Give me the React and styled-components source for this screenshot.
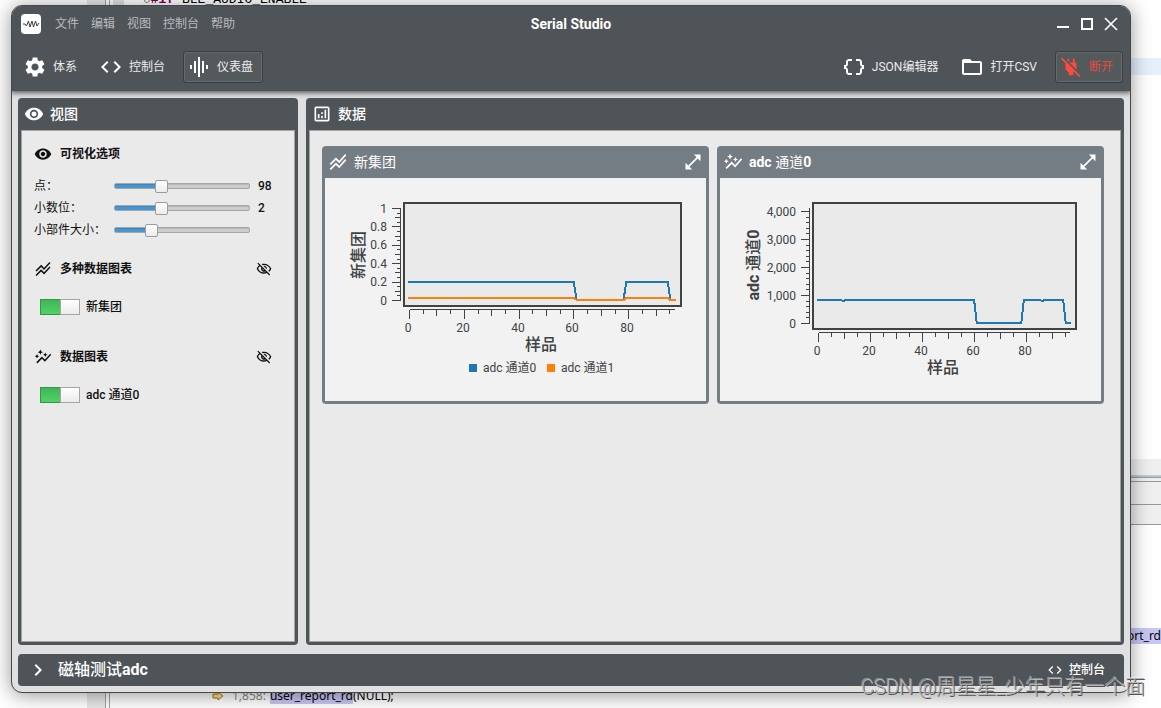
import React, { useState } from "react";
import styled, { createGlobalStyle } from "styled-components";
import {
  MdSettings,
  MdCode,
  MdDataObject,
  MdFolderOpen,
  MdVisibility,
  MdOutlineVisibilityOff,
  MdStackedLineChart,
  MdAutoGraph,
  MdOutlineAnalytics,
  MdOpenInFull,
  MdChevronRight,
} from "react-icons/md";

const font = '"Roboto", "Noto Sans CJK SC", sans-serif';

const GlobalStyle = createGlobalStyle`
  *, *::before, *::after { box-sizing: border-box; }
  body { margin: 0; background: #fff; font-family: ${font}; font-size: 12px; line-height: 16px; color: #111; }
  button, input { font: inherit; margin: 0; }
  svg { display: block; flex: none; }
`;

/* ---------- desktop behind the window ---------- */

const Desktop = styled.div`
  position: relative;
  min-height: 100vh;
  display: flex;
  padding: 5px 30px 15px 11px;
  overflow: hidden;
`;

const Behind = styled.div`
  position: absolute;
  white-space: pre;
  top: ${(p) => p.$top};
  bottom: ${(p) => p.$bottom};
  left: ${(p) => p.$left};
  right: ${(p) => p.$right};
  width: ${(p) => p.$width};
  height: ${(p) => p.$height};
  background: ${(p) => p.$bg};
`;

const Gutter = styled(Behind)`
  border-right: 1px solid #a0a0a0;
  &::after {
    content: "";
    position: absolute;
    top: 0;
    bottom: 0;
    right: -5px;
    width: 1px;
    background: #a0a0a0;
  }
`;

const CodeTop = styled(Behind)`
  font: 13px/16px "Liberation Mono", monospace;
  color: #000;
  b { color: #7f0055; }
  span { color: #888; }
`;

const CodeLine = styled(Behind)`
  font: 12px/16px "Noto Sans", sans-serif;
  color: #000;
  display: flex;
  align-items: center;
  mark { background: #c8c6f5; color: #000; }
  span { color: #888; margin: 0 4px 0 8px; }
`;

const Watermark = styled.div`
  position: absolute;
  right: 16px;
  bottom: 8px;
  font-size: 20px;
  line-height: 26px;
  font-weight: 300;
  white-space: nowrap;
  color: #b4b4b4;
  text-shadow: 1px 1px 0 #555, -1px -1px 0 rgba(255, 255, 255, 0.4);
`;

/* ---------- window ---------- */

const Window = styled.main`
  position: relative;
  flex: 1;
  min-width: 0;
  display: flex;
  flex-direction: column;
  border: 1px solid #42484b;
  border-radius: 11px;
  background: #e0e0e0;
  box-shadow: 0 2px 20px rgba(0, 0, 0, 0.42);
  overflow: hidden;
`;

const Header = styled.header`
  background: #4f5458;
  color: #fff;
  box-shadow: 0 1px 5px 1px rgba(0, 0, 0, 0.6);
`;

const TitleBar = styled.div`
  display: grid;
  grid-template-columns: 1fr auto 1fr;
  align-items: center;
  height: 36px;
  padding: 0 7px;
`;

const Menu = styled.nav`
  display: flex;
  align-items: center;
  gap: 12px;
  padding-left: 2px;
`;

const Logo = styled.svg`
  margin-right: 2px;
`;

const MenuItem = styled.button`
  border: 0;
  padding: 0;
  background: none;
  color: #b9bbbc;
`;

const Title = styled.h1`
  margin: 0;
  font-size: 14px;
  line-height: 20px;
  font-weight: 700;
`;

const WindowButtons = styled.div`
  display: flex;
  justify-content: flex-end;
`;

const WindowButton = styled.button`
  border: 0;
  padding: 0;
  background: none;
  color: #fff;
`;

const Toolbar = styled.div`
  display: flex;
  gap: 8px;
  padding: 9px 7px 8px;
`;

const Spacer = styled.div`
  flex: 1;
`;

const ToolButton = styled.button`
  display: flex;
  align-items: center;
  gap: 6px;
  height: 32px;
  padding: 0 9px 0 3px;
  border: 1px solid ${(p) => (p.$framed ? "#3b3f42" : "transparent")};
  border-radius: 3px;
  background: ${(p) => (p.$framed ? "#54595c" : "none")};
  box-shadow: ${(p) => (p.$framed ? "inset 0 0 0 1px #64696c" : "none")};
  color: ${(p) => (p.$danger ? "#ff4b3e" : "#fff")};
  white-space: nowrap;
  span { color: ${(p) => (p.$danger ? "#e8493e" : "#ececec")}; }
`;

const Body = styled.div`
  flex: 1;
  display: flex;
  flex-direction: column;
  gap: 9px;
  padding: 7px 6px 6px;
`;

const Panels = styled.div`
  flex: 1;
  display: grid;
  grid-template-columns: 280px 1fr;
  gap: 8px;
`;

const Panel = styled.section`
  display: flex;
  flex-direction: column;
  min-width: 0;
  padding: 0 3px 3px;
  border-radius: 4px;
  background: #4f5458;
`;

const PanelHeader = styled.h2`
  display: flex;
  align-items: center;
  gap: 6px;
  height: 32px;
  margin: 0;
  padding: 0 3px;
  color: #fff;
  font-size: 14px;
  font-weight: 500;
`;

const PanelBody = styled.div`
  flex: 1;
  border: 1px solid #a3a3a3;
  background: #eaeaea;
  padding: ${(p) => p.$padding};
`;

/* ---------- sidebar ---------- */

const SectionHeader = styled.div`
  display: flex;
  align-items: center;
  justify-content: space-between;
  height: 24px;
`;

const SectionTitle = styled.h3`
  display: flex;
  align-items: center;
  gap: 8px;
  margin: 0;
  font-size: 12px;
  font-weight: 700;
`;

const IconButton = styled.button`
  border: 0;
  padding: 0;
  background: none;
  color: inherit;
`;

const SliderList = styled.div`
  margin: 9px 0 16px;
`;

const SliderRow = styled.div`
  display: grid;
  grid-template-columns: 80px 1fr 22px;
  align-items: center;
  height: 22px;
  output { margin-left: 8px; font-weight: 500; white-space: nowrap; }
`;

const Range = styled.input`
  appearance: none;
  width: 100%;
  height: 14px;
  background: none;
  &::-webkit-slider-runnable-track {
    height: 6px;
    border: 1px solid #a6a6a6;
    border-radius: 2px;
    background: linear-gradient(
      to right,
      #4596d1 ${(p) => p.$fill}%,
      #cdcdcd ${(p) => p.$fill}%
    );
    box-shadow: inset 0 1px 0 rgba(0, 0, 0, 0.1);
  }
  &::-webkit-slider-thumb {
    appearance: none;
    width: 13px;
    height: 13px;
    margin-top: -4px;
    border: 1px solid #9c9c9c;
    border-radius: 2px;
    background: linear-gradient(#fff, #ececec);
  }
`;

const SwitchRow = styled.label`
  display: flex;
  align-items: center;
  gap: 6px;
  height: 24px;
  margin: 14px 0 26px;
  padding-left: 6px;
  font-weight: 500;
`;

const Switch = styled.input`
  appearance: none;
  position: relative;
  width: 40px;
  height: 16px;
  border: 1px solid #a5a5a5;
  border-radius: 1px;
  background: #d0d0d0;
  &:checked {
    border-color: #3a9148 #a5a5a5 #3a9148 #3a9148;
    background: linear-gradient(#42b556, #4fd465);
  }
  &::after {
    content: "";
    position: absolute;
    top: -1px;
    bottom: -1px;
    left: -1px;
    width: 20px;
    border: 1px solid #a5a5a5;
    background: linear-gradient(#fff, #ececec);
  }
  &:checked::after { left: 19px; }
`;

/* ---------- dashboard ---------- */

const Cards = styled.div`
  display: grid;
  grid-template-columns: 1fr 1fr;
  gap: 8px;
`;

const Card = styled.article`
  min-width: 0;
  padding: 0 3px 3px;
  border-radius: 4px;
  background: #757d84;
`;

const CardHeader = styled.div`
  display: flex;
  align-items: center;
  justify-content: space-between;
  height: 32px;
  padding: 0 3px;
  color: #fff;
`;

const CardTitle = styled.h3`
  display: flex;
  align-items: center;
  gap: 6px;
  margin: 0;
  font-size: 14px;
  font-weight: 400;
`;

const Plot = styled.svg`
  width: 100%;
  height: auto;
  background: #f2f2f2;
  font-family: ${font};
  font-size: 12px;
  fill: #404244;
`;

const AxisTitle = styled.text`
  font-size: 16px;
  font-weight: 500;
  text-anchor: middle;
`;

const BoldSpan = styled.tspan`
  font-weight: 700;
`;

const Footer = styled.footer`
  display: flex;
  align-items: center;
  justify-content: space-between;
  height: 32px;
  padding: 0 19px 0 8px;
  border-radius: 4px;
  background: #4f5458;
  color: #fff;
`;

const ProjectButton = styled.button`
  display: flex;
  align-items: center;
  gap: 8px;
  border: 0;
  padding: 0;
  background: none;
  color: #fff;
  font-size: 16px;
  font-weight: 500;
`;

const ConsoleButton = styled(ProjectButton)`
  gap: 6px;
  font-size: 12px;
`;

/* ---------- icons ---------- */

const EqualizerIcon = () => (
  <svg width="24" height="24" viewBox="0 0 24 24" fill="currentColor" shapeRendering="crispEdges">
    <path d="M3 10h2v4H3zM7 6h2v12H7zM11 2h2v20h-2zM15 6h2v12h-2zM19 10h2v4h-2z" />
  </svg>
);

const PlugOffIcon = () => (
  <svg width="24" height="24" viewBox="-1 -1 26 26" fill="currentColor">
    <path d="M20.84 22.73 15.31 17.2 14.5 18v3h-5v-3L6 14.5V9c0-.3.1-.59.25-.86L1.11 3l1.28-1.27 19.72 19.73-1.27 1.27M18 14.5V9c0-1-1-2-2-2V3h-2v4h-3.8l7.65 7.65.15-.15M10 3H8v1.8l2 2V3z" />
  </svg>
);

const AppLogo = () => (
  <Logo width="20" height="20" viewBox="0 0 20 20">
    <rect width="20" height="20" rx="4" fill="#fff" />
    <path
      d="M2 10h2l1.5 2 2-5 1.5 6 2-6 1.5 6 2-6 1.5 5 2-3"
      fill="none"
      stroke="#3c4043"
      strokeWidth="1"
      strokeLinejoin="round"
    />
  </Logo>
);

const windowIcons = {
  最小化: { d: "M6 15h12", width: 2 },
  最大化: { d: "M7 7h10v10H7z", width: 2 },
  关闭: { d: "M6 6l12 12M18 6L6 18", width: 1.6 },
};

/* ---------- components ---------- */

/* Sets the Latin letters and digits of a mixed title in bold. */
function Mixed({ text, as: Bold = "b" }) {
  return text
    .split(/([A-Za-z0-9]+)/)
    .map((part, i) => (i % 2 ? <Bold key={i}>{part}</Bold> : part));
}

function Slider({ id, label, initial, suffix }) {
  const [value, setValue] = useState(initial);
  return (
    <SliderRow>
      <label htmlFor={id}>{label}</label>
      <Range
        id={id}
        type="range"
        min="0"
        max="100"
        value={value}
        $fill={value}
        onChange={(e) => setValue(Number(e.target.value))}
      />
      <output htmlFor={id}>{suffix}</output>
    </SliderRow>
  );
}

function Chart({ frame, xAxis, yAxis, series, xTitle, yTitle, legend, name }) {
  const xTicks = Array.from({ length: 20 }, (_, i) => i * 5);
  return (
    <Plot viewBox="0 0 381 223" role="img" aria-label={name}>
      <rect {...frame} fill="#eaeaea" stroke="#404244" strokeWidth="2" />
      <g stroke="#404244" fill="none" shapeRendering="crispEdges">
        <path d={`M${yAxis.x} ${yAxis.top}V${yAxis.zero}`} />
        {yAxis.ticks.map((t) => (
          <path key={t.at} d={`M${yAxis.x} ${yAxis.zero - Math.round(t.at * yAxis.span)}h${-t.size}`} />
        ))}
        <path d={`M${xAxis.zero} ${xAxis.y}H350`} />
        {xTicks.map((v) => (
          <path
            key={v}
            d={`M${xAxis.zero + Math.round(v * xAxis.scale)} ${xAxis.y}v${v % 20 === 0 ? 9 : v % 10 === 0 ? 6 : 4}`}
          />
        ))}
      </g>
      {yAxis.labels.map((text, i) => (
        <text
          key={text}
          x={yAxis.labelX}
          y={Math.round(yAxis.zero - (i / yAxis.divisor) * yAxis.span + 4)}
          textAnchor="end"
        >
          {text}
        </text>
      ))}
      {[0, 20, 40, 60, 80].map((v) => (
        <text key={v} x={Math.floor(xAxis.zero + v * xAxis.scale - 1)} y={xAxis.y + 22} textAnchor="middle">
          {v}
        </text>
      ))}
      <AxisTitle x={xTitle.x} y={xTitle.y}>样品</AxisTitle>
      <AxisTitle transform={`translate(39 ${yTitle.y}) rotate(-90)`}>
        <Mixed text={yTitle.text} as={BoldSpan} />
      </AxisTitle>
      {series.map((s) => (
        <polyline
          key={s.color}
          points={s.points.map(([x, y]) => `${s.start + x * ((351 - s.start) / 97)},${y}`).join(" ")}
          fill="none"
          stroke={s.color}
          strokeWidth="2"
          shapeRendering="crispEdges"
        />
      ))}
      {legend.map((l) => (
        <g key={l.text}>
          <rect x={l.x} y="186" width="8" height="8" fill={l.color} />
          <text x={l.x + 14} y="194">{l.text}</text>
        </g>
      ))}
    </Plot>
  );
}

const pulse = (high, low) => [
  [0, high], [60, high], [61, low], [78, low], [79, high], [94, high], [95, low], [97, low],
];

const groupChart = {
  name: "新集团",
  frame: { x: 79, y: 25, width: 277, height: 103 },
  xAxis: { zero: 84.5, y: 131.5, scale: 2.74 },
  yAxis: {
    x: 75.5,
    top: 30,
    zero: 122.5,
    span: 92,
    divisor: 5,
    labelX: 62,
    labels: ["0", "0.2", "0.4", "0.6", "0.8", "1"],
    ticks: Array.from({ length: 21 }, (_, i) => ({
      at: i / 20,
      size: i % 4 === 0 ? 9 : i % 2 === 0 ? 6 : 4,
    })),
  },
  xTitle: { x: 216, y: 172 },
  yTitle: { text: "新集团", y: 77 },
  series: [
    { color: "#1f77b4", start: 83, points: pulse(104, 122) },
    { color: "#ff7f0e", start: 83, points: pulse(120, 122) },
  ],
  legend: [
    { x: 144, color: "#1f77b4", text: "adc 通道0" },
    { x: 222, color: "#ff7f0e", text: "adc 通道1" },
  ],
};

const channelChart = {
  name: "adc 通道0",
  frame: { x: 93, y: 25, width: 263, height: 126 },
  xAxis: { zero: 98.5, y: 154.5, scale: 2.6 },
  yAxis: {
    x: 89.5,
    top: 30,
    zero: 145.5,
    span: 112,
    divisor: 4,
    labelX: 76,
    labels: ["0", "1,000", "2,000", "3,000", "4,000"],
    ticks: Array.from({ length: 21 }, (_, i) => ({ at: i / 20, size: i % 5 === 0 ? 9 : 4 })),
  },
  xTitle: { x: 223, y: 195 },
  yTitle: { text: "adc 通道0", y: 87 },
  series: [
    {
      color: "#1f77b4",
      start: 97,
      points: [
        [0, 122], [9, 122], [10, 123], [11, 122], [60, 122], [61, 145], [78, 145],
        [79, 122], [85, 122], [86, 123], [87, 122], [94, 122], [95, 145], [97, 145],
      ],
    },
  ],
  legend: [],
};

function DashboardCard({ icon, title, chart }) {
  return (
    <Card>
      <CardHeader>
        <CardTitle>{icon}<span><Mixed text={title} /></span></CardTitle>
        <IconButton aria-label="展开"><MdOpenInFull size={20} /></IconButton>
      </CardHeader>
      <Chart {...chart} />
    </Card>
  );
}

function DatasetSection({ icon, title, item }) {
  return (
    <section>
      <SectionHeader>
        <SectionTitle>{icon}{title}</SectionTitle>
        <IconButton aria-label="全部隐藏"><MdOutlineVisibilityOff size={16} /></IconButton>
      </SectionHeader>
      <SwitchRow>
        <Switch type="checkbox" defaultChecked />
        {item}
      </SwitchRow>
    </section>
  );
}

export default function App() {
  return (
    <Desktop>
      <GlobalStyle />
      <Gutter $top="0" $bottom="0" $left="87px" $width="19px" $bg="#e8e8e8" />
      <Behind $top="0" $left="113px" $width="11px" $height="5px" $bg="#e0e0e0" />
      <CodeTop $top="-8px" $left="143px"><span>0</span><b>#if</b> BLE_AUDIO_ENABLE</CodeTop>
      <Behind $top="58px" $right="0" $width="40px" $height="17px" $bg="#e6f0fd" />
      <Behind $top="459px" $right="0" $width="40px" $height="66px" $bg="linear-gradient(#efefef 16px, #b9c9d8 16px 18px, #999 18px 19px, #efefef 19px 22px, #999 22px 23px, #efefef 23px 45px, #999 45px 46px, #efefef 46px 65px, #999 65px)" />
      <CodeLine $top="628px" $right="0"><mark>user_report_rd</mark></CodeLine>
      <CodeLine $bottom="4px" $left="212px">
        <svg width="12" height="10" viewBox="0 0 12 10" fill="#fbe08a" stroke="#a87512">
          <path d="M1 3h5V1l5 4-5 4V7H1z" />
        </svg>
        <span>1,858:</span><mark>user_report_rd</mark>(NULL);
      </CodeLine>

      <Window>
        <Header>
          <TitleBar>
            <Menu>
              <AppLogo />
              {["文件", "编辑", "视图", "控制台", "帮助"].map((m) => (
                <MenuItem key={m}>{m}</MenuItem>
              ))}
            </Menu>
            <Title>Serial Studio</Title>
            <WindowButtons>
              {Object.entries(windowIcons).map(([label, icon]) => (
                <WindowButton key={label} aria-label={label}>
                  <svg width="24" height="24" viewBox="0 0 24 24" fill="none" stroke="currentColor" strokeWidth={icon.width}>
                    <path d={icon.d} />
                  </svg>
                </WindowButton>
              ))}
            </WindowButtons>
          </TitleBar>
          <Toolbar>
            <ToolButton><MdSettings size={24} /><span>体系</span></ToolButton>
            <ToolButton><MdCode size={24} /><span>控制台</span></ToolButton>
            <ToolButton $framed><EqualizerIcon /><span>仪表盘</span></ToolButton>
            <Spacer />
            <ToolButton><MdDataObject size={24} /><span>JSON编辑器</span></ToolButton>
            <ToolButton><MdFolderOpen size={24} /><span>打开CSV</span></ToolButton>
            <ToolButton $framed $danger><PlugOffIcon /><span>断开</span></ToolButton>
          </Toolbar>
        </Header>

        <Body>
          <Panels>
            <Panel>
              <PanelHeader><MdVisibility size={20} />视图</PanelHeader>
              <PanelBody $padding="11px 22px 11px 12px">
                <SectionHeader>
                  <SectionTitle><MdVisibility size={18} />可视化选项</SectionTitle>
                </SectionHeader>
                <SliderList>
                  <Slider id="points" label="点：" initial={33} suffix="98" />
                  <Slider id="decimals" label="小数位：" initial={33} suffix="2" />
                  <Slider id="size" label="小部件大小：" initial={25} suffix="" />
                </SliderList>
                <DatasetSection icon={<MdStackedLineChart size={18} />} title="多种数据图表" item="新集团" />
                <DatasetSection icon={<MdAutoGraph size={18} />} title="数据图表" item="adc 通道0" />
              </PanelBody>
            </Panel>

            <Panel>
              <PanelHeader><MdOutlineAnalytics size={20} />数据</PanelHeader>
              <PanelBody $padding="15px 16px 15px 12px">
                <Cards>
                  <DashboardCard icon={<MdStackedLineChart size={20} />} title="新集团" chart={groupChart} />
                  <DashboardCard icon={<MdAutoGraph size={20} />} title="adc 通道0" chart={channelChart} />
                </Cards>
              </PanelBody>
            </Panel>
          </Panels>

          <Footer>
            <ProjectButton><MdChevronRight size={24} /><span><Mixed text="磁轴测试adc" /></span></ProjectButton>
            <ConsoleButton><MdCode size={16} />控制台</ConsoleButton>
          </Footer>
        </Body>
      </Window>
      <Watermark>CSDN @周星星_少年只有一个面</Watermark>
    </Desktop>
  );
}
